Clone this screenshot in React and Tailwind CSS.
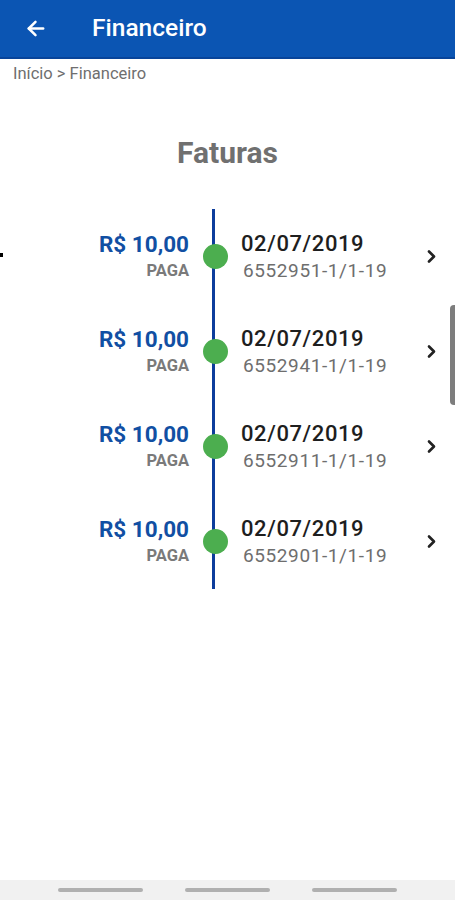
import React from "react";

const FATURAS = [
  { valor: "R$ 10,00", status: "PAGA", data: "02/07/2019", numero: "6552951-1/1-19" },
  { valor: "R$ 10,00", status: "PAGA", data: "02/07/2019", numero: "6552941-1/1-19" },
  { valor: "R$ 10,00", status: "PAGA", data: "02/07/2019", numero: "6552911-1/1-19" },
  { valor: "R$ 10,00", status: "PAGA", data: "02/07/2019", numero: "6552901-1/1-19" },
];

const font = { fontFamily: "Roboto, 'Liberation Sans', sans-serif" };

export default function App() {
  return (
    <div className="w-[455px] h-[900px] bg-white flex flex-col relative overflow-hidden" style={font}>
      {/* cabeçalho */}
      <div className="h-[59px] bg-[#0b55b3] border-b-2 border-[#08449a] flex items-center shrink-0">
        <svg className="ml-[24px] w-[23px] h-[23px]" viewBox="0 0 24 24" fill="none" stroke="white" strokeWidth="2.6" strokeLinecap="round" strokeLinejoin="round">
          <path d="M20 12H5" />
          <path d="M12 5l-7 7 7 7" />
        </svg>
        <span className="ml-[45px] text-white text-[24.5px] font-medium">Financeiro</span>
      </div>

      {/* breadcrumb */}
      <div className="px-[13px] pt-[3px] text-[16.5px] leading-[24px] text-[#6f6f6f]">Início &gt; Financeiro</div>

      <h1 className="mt-[49px] text-center text-[30px] font-bold text-[#707070] leading-[36px]">Faturas</h1>

      {/* linha do tempo */}
      <div className="mt-[38px] relative flex flex-col">
        <div className="absolute left-[212px] top-0 bottom-0 w-[3px] bg-[#0d3d9c]" />
        {FATURAS.map((f, i) => (
          <div key={i} className="h-[95px] flex items-center">
            <div className="w-[189px] flex flex-col items-end">
              <span className="text-[22.5px] font-bold text-[#114fa3] leading-[28px]">{f.valor}</span>
              <span className="text-[16.5px] font-bold text-[#7a7a7a] leading-[26px]">{f.status}</span>
            </div>
            <div className="w-[25px] h-[25px] rounded-full bg-[#4cae4f] ml-[14px] relative z-10" />
            <div className="ml-[13px] flex flex-col">
              <span className="text-[22px] text-[#1e1e1e] font-medium leading-[28px] tracking-[0.6px]">{f.data}</span>
              <span className="ml-[2px] text-[19px] text-[#6e6e6e] leading-[26px] tracking-[0.6px]">{f.numero}</span>
            </div>
            <svg className="ml-auto mr-[16px] w-[15px] h-[15px]" viewBox="0 0 24 24" fill="none" stroke="#222" strokeWidth="4.2" strokeLinecap="round" strokeLinejoin="round">
              <path d="M8 4l8 8-8 8" />
            </svg>
          </div>
        ))}
      </div>

      {/* barra de rolagem */}
      <div className="absolute right-0 top-[305px] w-[5px] h-[100px] bg-[#7d7d7d] rounded-l-sm" />
      <div className="absolute left-0 top-[253px] w-[3px] h-[4px] bg-black" />

      {/* barra inferior */}
      <div className="mt-auto h-[20px] bg-[#f1f1f1] flex items-center justify-center gap-[42px]">
        <div className="w-[85px] h-[4px] rounded-full bg-[#b0b0b0]" />
        <div className="w-[85px] h-[4px] rounded-full bg-[#b0b0b0]" />
        <div className="w-[85px] h-[4px] rounded-full bg-[#b0b0b0]" />
      </div>
    </div>
  );
}
